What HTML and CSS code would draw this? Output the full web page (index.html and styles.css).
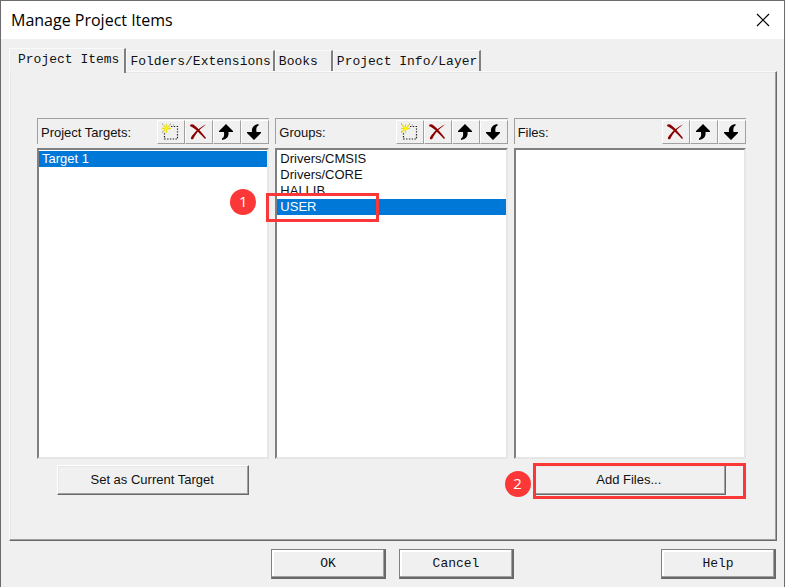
FILE: index.html
```html
<!DOCTYPE html>
<html lang="en">
<head>
    <meta charset="UTF-8">
    <meta name="viewport" content="width=device-width, initial-scale=1.0">
    <title>Manage Project Items</title>
    <link rel="stylesheet" href="styles.css">
</head>
<body>
    <!-- Shared icons -->
    <svg class="icon-defs" aria-hidden="true">
        <symbol id="icon-new" viewBox="0 0 18 18">
            <path d="M10 3.500h6.500v12.500H3.500V9" fill="none" stroke="#222" stroke-width="1.200" stroke-dasharray="1.400 1.400"/>
            <path d="M5.500 1v3M5.500 7v3M1 5.500h3M7 5.500h3M2 2l2 2M9 2L7 4M2 9l2-2" stroke="#e8dc20" stroke-width="1.300"/>
            <path d="M4 4h3v3H4z" fill="#fff200"/>
            <path d="M1 1h1M9 1h1M1 9h1M12 2h1" stroke="#888" stroke-width="1"/>
        </symbol>
        <symbol id="icon-delete" viewBox="0 0 18 18">
            <path d="M1 2c1-1 3-1 4 0c4 3 8 8 12 13l-1 1C12 12 8 7 3 4C2 4 1 3 1 2z" fill="#8b0000"/>
            <path d="M17 1.500C12 5 7 10 4.500 15.500c-1 1.500-3 1-2.500-1C5 9.500 11 4 17 1.500z" fill="#8b0000"/>
        </symbol>
        <symbol id="icon-up" viewBox="0 0 18 18">
            <path d="M9 1l7 7v1h-4.500c.5 4-1 7-6.500 8v-1.500c2-1 2.500-3 2-6.500H2V8z"/>
        </symbol>
        <symbol id="icon-down" viewBox="0 0 18 18">
            <path d="M9 17l7-7V9h-4.500c-.5-3.500 0-5.500 2-6.500V1C8 2 6.500 5 7 9H2v1z"/>
        </symbol>
    </svg>

    <div class="dialog" role="dialog" aria-labelledby="dialog-title">
        <header class="title-bar">
            <h1 id="dialog-title">Manage Project Items</h1>
            <button type="button" class="close-btn" aria-label="Close">
                <svg width="14" height="14" viewBox="0 0 14 14"><path d="M1 1l12 12M13 1L1 13" stroke="#000" stroke-width="1.200"/></svg>
            </button>
        </header>

        <main class="content">
            <div class="tabs" role="tablist">
                <button type="button" class="tab active" role="tab" aria-selected="true">Project Items</button>
                <button type="button" class="tab" role="tab">Folders/Extensions</button>
                <button type="button" class="tab" role="tab">Books</button>
                <button type="button" class="tab" role="tab">Project Info/Layer</button>
            </div>

            <div class="panel" role="tabpanel">
                <section class="column">
                    <div class="toolbar">
                        <label for="targets">Project Targets:</label>
                        <button type="button" class="tool" aria-label="New target"><svg><use href="#icon-new"/></svg></button>
                        <button type="button" class="tool" aria-label="Delete target"><svg><use href="#icon-delete"/></svg></button>
                        <button type="button" class="tool" aria-label="Move target up"><svg><use href="#icon-up"/></svg></button>
                        <button type="button" class="tool" aria-label="Move target down"><svg><use href="#icon-down"/></svg></button>
                    </div>
                    <div class="list-wrap">
                        <select id="targets" class="list" size="4">
                            <option selected>Target 1</option>
                        </select>
                    </div>
                    <div class="action">
                        <button type="button" class="btn">Set as Current Target</button>
                    </div>
                </section>

                <section class="column">
                    <div class="toolbar">
                        <label for="groups">Groups:</label>
                        <button type="button" class="tool" aria-label="New group"><svg><use href="#icon-new"/></svg></button>
                        <button type="button" class="tool" aria-label="Delete group"><svg><use href="#icon-delete"/></svg></button>
                        <button type="button" class="tool" aria-label="Move group up"><svg><use href="#icon-up"/></svg></button>
                        <button type="button" class="tool" aria-label="Move group down"><svg><use href="#icon-down"/></svg></button>
                    </div>
                    <div class="list-wrap">
                        <select id="groups" class="list" size="4">
                            <option>Drivers/CMSIS</option>
                            <option>Drivers/CORE</option>
                            <option>HALLIB</option>
                            <option selected>USER</option>
                        </select>
                        <div class="mark mark-group"></div>
                        <span class="step step-group">1</span>
                    </div>
                    <div class="action"></div>
                </section>

                <section class="column">
                    <div class="toolbar">
                        <label for="files">Files:</label>
                        <button type="button" class="tool" aria-label="Delete file"><svg><use href="#icon-delete"/></svg></button>
                        <button type="button" class="tool" aria-label="Move file up"><svg><use href="#icon-up"/></svg></button>
                        <button type="button" class="tool" aria-label="Move file down"><svg><use href="#icon-down"/></svg></button>
                    </div>
                    <div class="list-wrap">
                        <select id="files" class="list" size="4"></select>
                    </div>
                    <div class="action">
                        <button type="button" class="btn">Add Files...</button>
                        <div class="mark mark-add"></div>
                        <span class="step step-add">2</span>
                    </div>
                </section>
            </div>
        </main>

        <footer class="footer">
            <div class="footer-main">
                <button type="button" class="btn btn-dialog">OK</button>
                <button type="button" class="btn btn-dialog">Cancel</button>
            </div>
            <button type="button" class="btn btn-dialog btn-help">Help</button>
        </footer>
    </div>
</body>
</html>
```

FILE: styles.css
```css
* {
    box-sizing: border-box;
}
body {
    margin: 0;
    font-family: "Liberation Sans", Arial, sans-serif;
    font-size: 13px;
    color: #111;
}
button, select {
    font: inherit;
    color: inherit;
    margin: 0;
    border-radius: 0;
}
.icon-defs {
    position: absolute;
    width: 0;
    height: 0;
}
.dialog {
    display: flex;
    flex-direction: column;
    min-height: 100vh;
    background: #f0f0f0;
    border: 1px solid #6e6b6e;
    border-bottom: none;
}
.title-bar {
    display: flex;
    align-items: center;
    justify-content: space-between;
    height: 38px;
    padding: 0 7px 0 10px;
    background: #fff;
}
.title-bar h1 {
    margin: 0;
    font-family: "Open Sans", "Noto Sans", sans-serif;
    font-size: 16px;
    font-weight: normal;
    line-height: 22px;
    color: #000;
}
.close-btn {
    display: flex;
    padding: 7px;
    border: none;
    background: none;
}
.content {
    flex: 1;
    display: flex;
    flex-direction: column;
    padding: 9px 7px 8px 8px;
}

/* Tabs */
.tabs {
    display: flex;
    align-items: flex-end;
    height: 23px;
}
.tab {
    height: 21px;
    min-width: 58px;
    padding: 0 2px 0 3px;
    border: 1px solid #fafafa;
    border-right: 2px solid #808080;
    border-bottom: none;
    background: #f0f0f0;
    font-family: "Liberation Mono", "Courier New", monospace;
    text-align: left;
    white-space: nowrap;
}
.tab.active {
    position: relative;
    height: 25px;
    margin-bottom: -2px;
    padding: 0 5px 4px 8px;
}
.panel {
    flex: 1;
    display: grid;
    grid-template-columns: repeat(3, minmax(0, 1fr));
    gap: 6px;
    padding: 46px 30px 45px 27px;
    border: 1px solid #fafafa;
    border-right-color: #696969;
    border-bottom-color: #696969;
    box-shadow: inset -1px -1px #a0a0a0, inset 1px 1px #e6e6e6;
}

/* Columns */
.column {
    display: flex;
    flex-direction: column;
}
.toolbar {
    display: flex;
    height: 26px;
    margin-bottom: 4px;
    border-top: 1px solid #a0a0a0;
    border-left: 1px solid #a0a0a0;
}
.toolbar label {
    flex: 1;
    padding: 0 3px;
    line-height: 27px;
}
.tool {
    display: flex;
    align-items: center;
    justify-content: center;
    width: 28px;
    height: 24px;
    margin-top: 1px;
    padding: 0 2px 0 0;
    border: 1px solid #fff;
    border-right-color: #a0a0a0;
    border-bottom-color: #a0a0a0;
    background: #f0f0f0;
}
.tool svg {
    width: 18px;
    height: 18px;
}
.list-wrap {
    position: relative;
    flex: 1;
    display: flex;
}
.list {
    flex: 1;
    min-width: 0;
    padding: 1px 0 0;
    border: 2px solid #808080;
    border-right-color: #e6e6e6;
    border-bottom-color: #e6e6e6;
    background: #fff;
    outline: none;
    overflow: hidden;
}
.list option {
    min-height: 16px;
    padding: 0 3px;
    line-height: 16px;
}
.list option:checked {
    background: linear-gradient(#0078d7, #0078d7);
    -webkit-text-fill-color: #fff;
}

/* Buttons */
.action {
    position: relative;
    height: 30px;
    margin-top: 6px;
    padding: 0 20px;
}
.btn {
    width: 100%;
    height: 30px;
    padding: 0 2px 2px 0;
    border: 1px solid #fff;
    border-right-color: #696969;
    border-bottom-color: #696969;
    background: #f0f0f0;
    box-shadow: inset -1px -1px #a0a0a0, inset 1px 1px #e6e6e6;
}
.footer {
    display: grid;
    grid-template-columns: 1fr auto 1fr;
    padding: 0 8px;
    margin-bottom: 8px;
}
.footer-main {
    grid-column: 2;
    display: flex;
    gap: 13px;
}
.btn-dialog {
    width: 115px;
    padding: 0;
    border: 1px solid #808080;
    border-right: 2px solid #696969;
    border-bottom: 2px solid #696969;
    box-shadow: inset -1px -1px #a0a0a0, inset 2px 2px #fff;
    font-family: "Liberation Mono", "Courier New", monospace;
}
.btn-help {
    justify-self: end;
}

/* Step markers drawn over the dialog */
.mark {
    position: absolute;
    border: 3px solid #fc3737;
    pointer-events: none;
}
.mark-group {
    top: 45px;
    left: -9px;
    width: 113px;
    height: 29px;
}
.mark-add {
    top: -2px;
    left: 19px;
    right: 0;
    height: 36px;
}
.step {
    position: absolute;
    z-index: 1;
    width: 26px;
    height: 26px;
    border-radius: 50%;
    background: #fc3737;
    color: #fff;
    font-family: "Open Sans", "Noto Sans", sans-serif;
    font-size: 15px;
    line-height: 24px;
    text-align: center;
}
.step-group {
    top: 41px;
    left: -45px;
}
.step-add {
    top: 6px;
    left: -9px;
}
```
